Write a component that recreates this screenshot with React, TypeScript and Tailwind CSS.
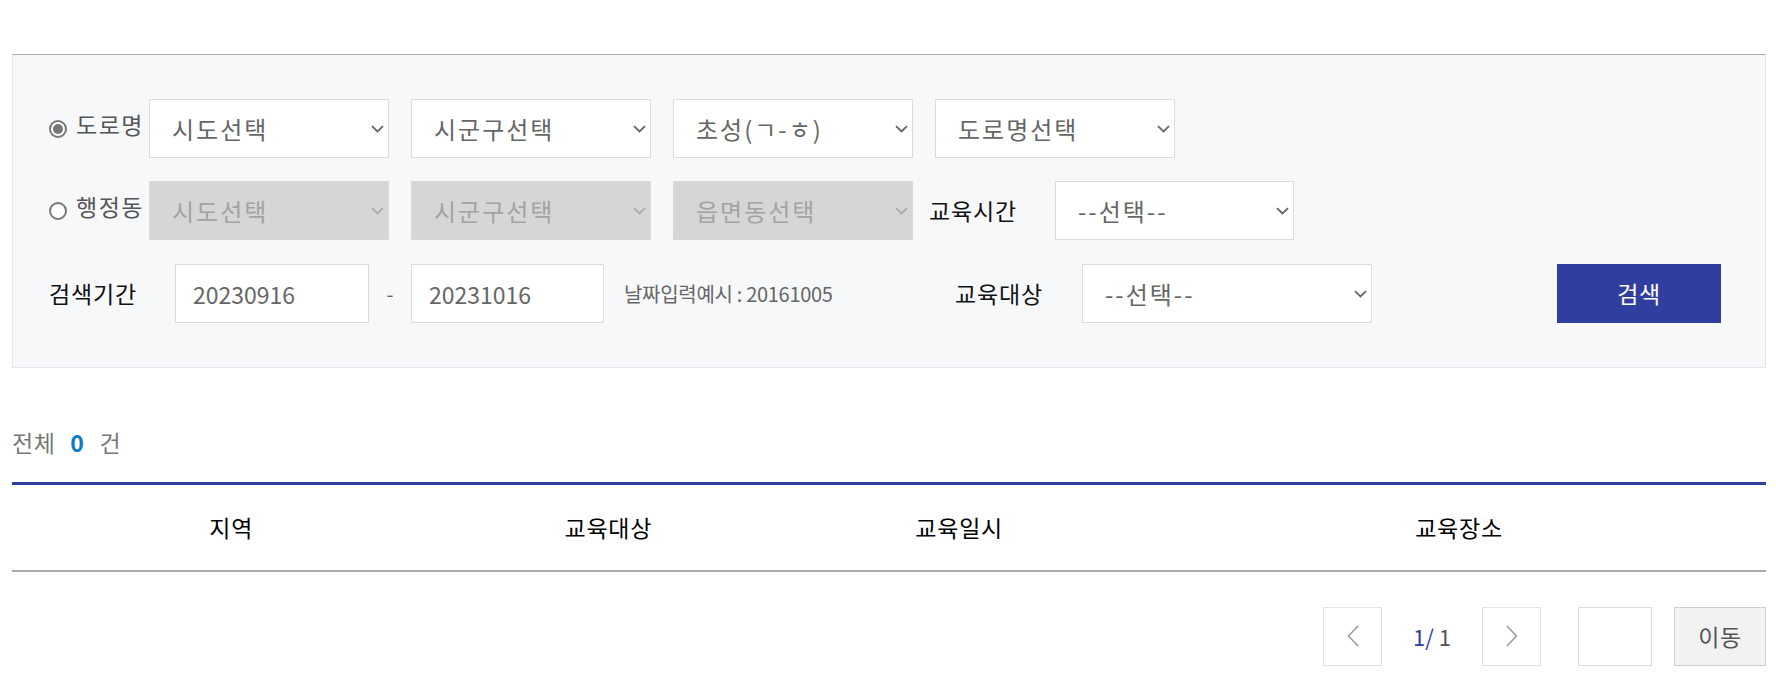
import type { ReactNode } from 'react';

function Chevron({ muted }: { muted?: boolean }) {
  return (
    <svg
      width="13"
      height="8"
      viewBox="0 0 13 8"
      className="pointer-events-none absolute right-[5px] top-1/2 -translate-y-1/2"
    >
      <path d="M1 1.2l5.5 5.3 5.5-5.3" fill="none" stroke={muted ? '#aaa' : '#666'} strokeWidth="1.8" />
    </svg>
  );
}

function Select({ label, width, disabled }: { label: string; width: string; disabled?: boolean }) {
  return (
    <div className={`relative h-[59px] shrink-0 ${width}`}>
      <select
        disabled={disabled}
        className={
          disabled
            ? 'h-full w-full appearance-none border border-[#d9d9d9] bg-[#d6d6d6] pl-[22px] text-[24px] tracking-[2px] text-[#a3a3a3] outline-none'
            : 'h-full w-full appearance-none border border-[#dcdcdc] bg-white pl-[22px] text-[24px] tracking-[2px] text-[#666] outline-none'
        }
        defaultValue={label}
      >
        <option>{label}</option>
      </select>
      <Chevron muted={disabled} />
    </div>
  );
}

function Radio({ checked, children }: { checked?: boolean; children: ReactNode }) {
  return (
    <label className="flex h-[59px] w-[100px] shrink-0 items-start pt-[8px]">
      <span className="mt-[13px] flex h-[18px] w-[18px] items-center justify-center rounded-full border-2 border-[#777] bg-white">
        {checked && <span className="h-[10px] w-[10px] rounded-full bg-[#777]" />}
      </span>
      <span className="ml-[9px] text-[23px] leading-[34px] tracking-[1.5px] text-[#555]">{children}</span>
    </label>
  );
}

function Label({ children, width }: { children: ReactNode; width: string }) {
  return <span className={`shrink-0 text-[23px] tracking-[0.8px] text-[#111] ${width}`}>{children}</span>;
}

export default function App() {
  return (
    <div className="min-h-[679px] bg-white pt-[54px] pl-[12px] pr-[10px] font-['Noto_Sans_CJK_KR','Malgun_Gothic',sans-serif]">
      <div className="border border-[#e4e6ea] border-t-[#ababab] bg-[#f7f8fa] pt-[44px] pb-[44px] pl-[36px]">
        <div className="flex items-center">
          <Radio checked>도로명</Radio>
          <Select label="시도선택" width="w-[240px]" />
          <div className="ml-[22px]"><Select label="시군구선택" width="w-[240px]" /></div>
          <div className="ml-[22px]"><Select label="초성(ㄱ-ㅎ)" width="w-[240px]" /></div>
          <div className="ml-[22px]"><Select label="도로명선택" width="w-[240px]" /></div>
        </div>

        <div className="mt-[23px] flex items-center">
          <Radio>행정동</Radio>
          <Select label="시도선택" width="w-[240px]" disabled />
          <div className="ml-[22px]"><Select label="시군구선택" width="w-[240px]" disabled /></div>
          <div className="ml-[22px]"><Select label="읍면동선택" width="w-[240px]" disabled /></div>
          <div className="ml-[16px] flex items-center">
            <Label width="w-[126px]">교육시간</Label>
            <Select label="--선택--" width="w-[239px]" />
          </div>
        </div>

        <div className="mt-[24px] flex items-center">
          <Label width="w-[126px]">검색기간</Label>
          <input
            defaultValue="20230916"
            className="h-[59px] w-[194px] shrink-0 border border-[#dcdcdc] bg-white pl-[17px] text-[23px] text-[#666] outline-none"
          />
          <span className="w-[42px] shrink-0 text-center text-[20px] text-[#666]">-</span>
          <input
            defaultValue="20231016"
            className="h-[59px] w-[193px] shrink-0 border border-[#dcdcdc] bg-white pl-[17px] text-[23px] text-[#666] outline-none"
          />
          <span className="w-[351px] shrink-0 pl-[20px] text-[20px] tracking-[-0.3px] text-[#666]">
            날짜입력예시 : 20161005
          </span>
          <Label width="w-[127px]">교육대상</Label>
          <Select label="--선택--" width="w-[290px]" />
          <button className="ml-[185px] h-[59px] w-[164px] shrink-0 bg-[#303f9f] text-[23px] tracking-[0.5px] text-white">
            검색
          </button>
        </div>
      </div>

      <div className="mt-[59px] mb-[25px] flex h-[30px] items-center text-[23px] leading-[30px] tracking-[0.5px] text-[#777]">
        <span>전체</span>
        <span className="mx-[15px] font-bold text-[#0a7ac9]">0</span>
        <span>건</span>
      </div>

      <table className="w-full border-collapse">
        <thead>
          <tr className="h-[87px] border-t-[3px] border-b-2 border-t-[#303f9f] border-b-[#aaa]">
            <th className="w-[25%] text-[23px] font-normal tracking-[0.8px] text-black">지역</th>
            <th className="w-[18%] text-[23px] font-normal tracking-[0.8px] text-black">교육대상</th>
            <th className="w-[22%] text-[23px] font-normal tracking-[0.8px] text-black">교육일시</th>
            <th className="w-[35%] text-[23px] font-normal tracking-[0.8px] text-black">교육장소</th>
          </tr>
        </thead>
      </table>

      <div className="mt-[35px] flex items-center justify-end">
        <button className="flex h-[59px] w-[59px] items-center justify-center border border-[#e3e3e3] bg-white">
          <svg width="12" height="22" viewBox="0 0 12 22">
            <path d="M11 1L1.5 11 11 21" fill="none" stroke="#999" strokeWidth="1.5" />
          </svg>
        </button>
        <span className="mx-[31px] text-[22px] text-[#555]">
          <span className="text-[#303f9f]">1/</span> 1
        </span>
        <button className="flex h-[59px] w-[59px] items-center justify-center border border-[#e3e3e3] bg-white">
          <svg width="12" height="22" viewBox="0 0 12 22">
            <path d="M1 1l9.5 10L1 21" fill="none" stroke="#999" strokeWidth="1.5" />
          </svg>
        </button>
        <input className="ml-[37px] h-[59px] w-[74px] border border-[#dcdcdc] bg-white outline-none" />
        <button className="ml-[22px] h-[59px] w-[92px] border border-[#cfcfcf] bg-[#f2f2f2] text-[23px] tracking-[0.5px] text-[#555]">
          이동
        </button>
      </div>
    </div>
  );
}
